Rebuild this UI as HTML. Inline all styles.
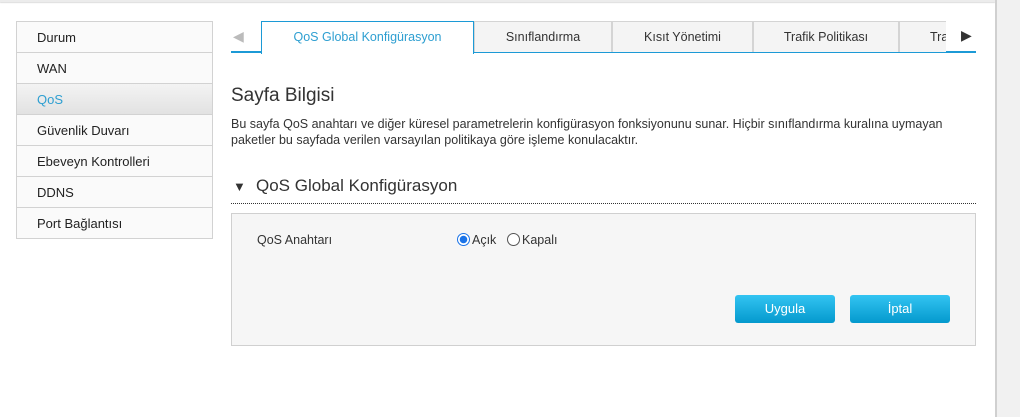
<!DOCTYPE html>
<html><head><meta charset="utf-8"><style>
*{margin:0;padding:0;box-sizing:border-box}
body{width:1020px;height:417px;overflow:hidden;background:#fff;font-family:"Liberation Sans",sans-serif;color:#333;position:relative;font-size:13px}
.abs{position:absolute}
.topbar{left:0;top:0;width:995px;height:2px;background:#ececec;box-shadow:0 1px 1px #ddd}
.right{left:995px;top:0;width:25px;height:417px;background:#f1f1f1;border-left:2px solid #d0d0d0}
.side{left:16px;top:21px;width:197px;border:1px solid #d2d2d2;border-bottom:none}
.side div{height:31px;line-height:31px;padding-left:20px;border-bottom:1px solid #d2d2d2;background:#fafafa;font-size:13px;color:#222}
.side div.act{background:linear-gradient(#f3f3f3,#e2e2e2);color:#2e9fd1}
.tabline{left:231px;top:51px;width:745px;height:2px;background:#1c9ad6}
.tab{top:21px;height:31px;line-height:31px;text-align:center;background:#f4f4f4;border:1px solid #d4d4d4;border-bottom:none;font-size:12.5px;color:#333}
.tab.act{background:#fff;border:1px solid #1c9ad6;border-bottom:none;height:33px;color:#2e9fd1;z-index:2}
.btn{top:295px;width:100px;height:28px;border-radius:3px;background:linear-gradient(#33c4f2,#0499cd);color:#fff;text-align:center;line-height:28px;font-size:13px}
.radio{width:13px;height:13px;border-radius:50%;border:1px solid #555;background:#fff}
</style></head><body>
<div class="abs topbar"></div>
<div class="abs right"></div>
<div class="abs side">
<div>Durum</div><div>WAN</div><div class="act">QoS</div><div>Güvenlik Duvarı</div><div>Ebeveyn Kontrolleri</div><div>DDNS</div><div>Port Bağlantısı</div>
</div>
<div class="abs" style="left:233px;top:28px;font-size:14px;color:#bbb">◀</div>
<div class="abs tabline"></div>
<div class="abs tab act" style="left:261px;width:213px">QoS Global Konfigürasyon</div>
<div class="abs tab" style="left:474px;width:138px">Sınıflandırma</div>
<div class="abs tab" style="left:612px;width:141px">Kısıt Yönetimi</div>
<div class="abs tab" style="left:753px;width:146px">Trafik Politikası</div>
<div class="abs tab" style="left:899px;width:47px;text-align:left;padding-left:30px;overflow:hidden;border-right:none">Tra</div>
<div class="abs" style="left:961px;top:27px;font-size:14px;color:#333">▶</div>
<div class="abs" style="left:231px;top:85px;font-size:19px;color:#333">Sayfa Bilgisi</div>
<div class="abs" style="left:231px;top:116px;width:745px;font-size:12.5px;line-height:16px;color:#333">Bu sayfa QoS anahtarı ve diğer küresel parametrelerin konfigürasyon fonksiyonunu sunar. Hiçbir sınıflandırma kuralına uymayan paketler bu sayfada verilen varsayılan politikaya göre işleme konulacaktır.</div>
<div class="abs" style="left:233px;top:179px;font-size:13px;color:#333">▼</div>
<div class="abs" style="left:256px;top:176px;font-size:17px;color:#333">QoS Global Konfigürasyon</div>
<div class="abs" style="left:231px;top:203px;width:745px;border-top:1px dotted #333"></div>
<div class="abs" style="left:231px;top:213px;width:745px;height:133px;background:#f6f6f6;border:1px solid #d0d0d0"></div>
<div class="abs" style="left:257px;top:233px;font-size:12.5px">QoS Anahtarı</div>
<div class="abs radio" style="left:457px;top:233px;border-color:#1a73e8;background:radial-gradient(circle,#1a73e8 3.5px,#fff 4px)"></div>
<div class="abs" style="left:472px;top:233px;font-size:12.5px">Açık</div>
<div class="abs radio" style="left:507px;top:233px"></div>
<div class="abs" style="left:522px;top:233px;font-size:12.5px">Kapalı</div>
<div class="abs btn" style="left:735px">Uygula</div>
<div class="abs btn" style="left:850px">İptal</div>
</body></html>
